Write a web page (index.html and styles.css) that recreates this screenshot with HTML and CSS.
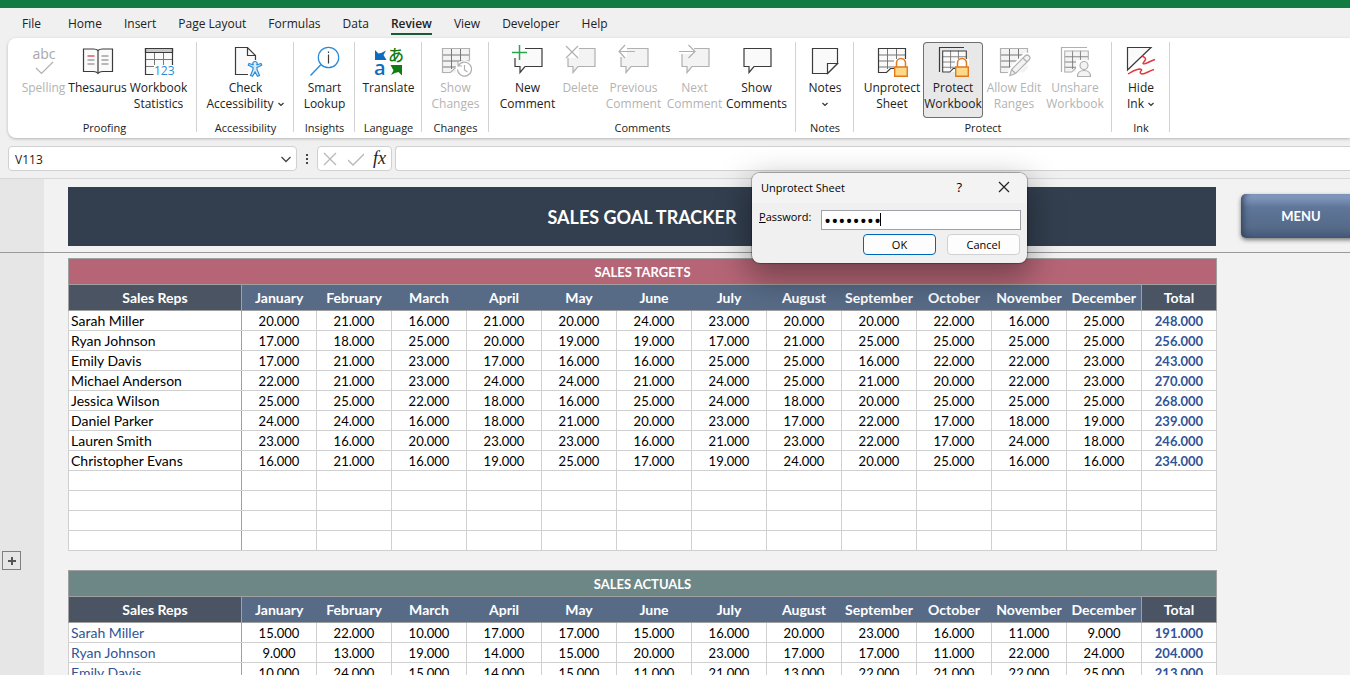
FILE: index.html
```
<!DOCTYPE html>
<html lang="en">
<head>
    <meta charset="UTF-8">
    <meta name="viewport" content="width=device-width, initial-scale=1.0">
    <title>Sales Goal Tracker</title>
    <link rel="stylesheet" href="styles.css">
</head>
<body>

    <!-- Shared icon parts -->
    <svg class="defs" aria-hidden="true">
        <symbol id="bubble" viewBox="0 0 32 32">
            <path d="M3 3.500h27v18H13l-5 6v-6H3z"/>
        </symbol>
        <symbol id="grid" viewBox="0 0 32 32">
            <path d="M2.500 3.500h27v20l-4 4h-12l-3-1-3 2h-5z" stroke="none"/>
            <path d="M2.500 10h27M2.500 16h27M2.500 22h17M11.500 3v21M20.500 3v19" class="thin"/>
            <path d="M29.500 15V3.500h-27v24h8l4-4h4" fill="none"/>
        </symbol>
        <symbol id="lock" viewBox="0 0 32 32">
            <path d="M18 14h14v18H18z" class="halo"/>
            <path d="M20.500 22v-4a4.500 4.500 0 0 1 9 0v4" fill="#fff" stroke="#e07a1f" stroke-width="1.500"/>
            <path d="M18.700 22h12.600v9.300H18.700z" fill="#fbd989" stroke="#e07a1f" stroke-width="1.400"/>
        </symbol>
        <symbol id="chevron" viewBox="0 0 8 8">
            <path d="M1.500 3l2.500 2.500L6.500 3" fill="none" stroke="#333" stroke-width="1.200"/>
        </symbol>
    </svg>

    <header>
        <div class="titlebar"></div>
        <nav class="tabs">
            <a href="#" class="file">File</a>
            <a href="#">Home</a>
            <a href="#">Insert</a>
            <a href="#">Page Layout</a>
            <a href="#">Formulas</a>
            <a href="#">Data</a>
            <a href="#" class="active">Review</a>
            <a href="#">View</a>
            <a href="#">Developer</a>
            <a href="#">Help</a>
        </nav>

        <div class="ribbon">
            <section class="group proofing">
                <div class="tools">
                    <button class="tool narrow" disabled>
                        <svg class="icon" viewBox="0 0 32 32"><text x="16" y="14" text-anchor="middle" class="abc">abc</text><path d="M8 23l5.500 5.500L25 17" fill="none"/></svg>
                        <span>Spelling</span>
                    </button>
                    <button class="tool wide">
                        <svg class="icon" viewBox="0 0 32 32"><path d="M1.500 4h10q3 0 4.500 1.500Q17.500 4 20.500 4h10v22.500h-10q-3 0-4.500 2-1.500-2-4.500-2h-10zM16 5.500v22"/><path d="M5.500 15h7M5.500 19h7M19.500 11h7M19.500 15h7M19.500 19h7" class="thin"/><path d="M5.500 11h7" stroke="#d13438"/></svg>
                        <span>Thesaurus</span>
                    </button>
                    <button class="tool">
                        <svg class="icon" viewBox="0 0 32 32"><path d="M2.500 3.500h27v26h-27z" stroke="none"/><path d="M2.500 3.500h27v4h-27z" fill="#c8c8c8"/><path d="M2.500 14.500h27M2.500 21.500h9M11.500 8v13M20.500 8v12" class="thin"/><path d="M29.500 20V3.500h-27v26h8" fill="none"/><path d="M11 20h21v12H11z" fill="#fff" stroke="none"/><text x="11" y="30" class="digits">123</text></svg>
                        <span>Workbook<br>Statistics</span>
                    </button>
                </div>
                <h2>Proofing</h2>
            </section>

            <section class="group access">
                <div class="tools">
                    <button class="tool broad">
                        <svg class="icon" viewBox="0 0 32 32"><path d="M5.500 2.500h12l8 8v18h-20z" stroke="none"/><path d="M18 29.500H5.500v-27h12l8 8V15M17.500 2.500v8h8" fill="none"/><path d="M18 15h14v17H18z" class="halo"/><path d="M25 16.500a2 2 0 0 1 1.500 3.500l4.500-1.500.7 1.800-4.700 2.200v2l2.500 6-2 .8L25 27l-2.500 4.300-2-.8 2.500-6v-2l-4.700-2.200.7-1.800 4.500 1.500a2 2 0 0 1 1.500-3.500z" fill="#d6ecfa" stroke="#2b8bd6"/></svg>
                        <span>Check<br>Accessibility <svg class="chev"><use href="#chevron"/></svg></span>
                    </button>
                </div>
                <h2>Accessibility</h2>
            </section>

            <section class="group insights">
                <div class="tools">
                    <button class="tool">
                        <svg class="icon" viewBox="0 0 32 32"><circle cx="19.500" cy="12.500" r="10.200" stroke="#2b8bd6" fill="#fff"/><path d="M12 19.500L1.500 30.500" stroke="#2b8bd6" stroke-width="1.400"/><path d="M19.500 9.500v9M19.500 6.500v1.500"/></svg>
                        <span>Smart<br>Lookup</span>
                    </button>
                </div>
                <h2>Insights</h2>
            </section>

            <section class="group medium">
                <div class="tools">
                    <button class="tool">
                        <svg class="icon" viewBox="0 0 32 32"><path d="M2 5l3.500 3.500Q9 8 13 5.500L10.500 10l3 5H2z" fill="#0f6cbd" stroke="none"/><text x="1" y="30" class="latin">a</text><text x="15" y="16" class="kana">あ</text><path d="M29 20v10.500L25.500 27Q22 27.500 18 30l2.500-4.500L17.500 20z" fill="#107c10" stroke="none"/></svg>
                        <span>Translate</span>
                    </button>
                </div>
                <h2>Language</h2>
            </section>

            <section class="group medium">
                <div class="tools">
                    <button class="tool" disabled>
                        <svg class="icon" viewBox="0 0 32 32"><use href="#grid"/><circle cx="24.500" cy="24" r="9" class="halo"/><path d="M18.500 20.500a7 7 0 1 1-1 4M18 17v4h4M24.500 20v5l3 2" fill="none"/></svg>
                        <span>Show<br>Changes</span>
                    </button>
                </div>
                <h2>Changes</h2>
            </section>

            <section class="group comments">
                <div class="tools">
                    <button class="tool">
                        <svg class="icon" viewBox="0 0 32 32"><use href="#bubble"/><path d="M0 1h7v12H0zM7 1h6v6H7z" fill="#fff" stroke="none"/><path d="M7.500 0v15M0 7.500h15" stroke="#2ea44f" stroke-width="1.500"/></svg>
                        <span>New<br>Comment</span>
                    </button>
                    <button class="tool narrow" disabled>
                        <svg class="icon" viewBox="0 0 32 32"><use href="#bubble"/><path d="M0 0h14v13H0z" fill="#fff" stroke="none"/><path d="M1 1l12 12M13 1L1 13"/></svg>
                        <span>Delete</span>
                    </button>
                    <button class="tool" disabled>
                        <svg class="icon" viewBox="0 0 32 32"><use href="#bubble"/><path d="M0 0h9v12H0z" fill="#fff" stroke="none"/><path d="M17 6.500H1M7 0L1 6.500 7 13" fill="none"/></svg>
                        <span>Previous<br>Comment</span>
                    </button>
                    <button class="tool wide" disabled>
                        <svg class="icon" viewBox="0 0 32 32"><use href="#bubble"/><path d="M0 1h15v8H0z" fill="#fff" stroke="none"/><path d="M0 6.500h16M9.500 0L16 6.500 9.500 13" fill="none"/></svg>
                        <span>Next<br>Comment</span>
                    </button>
                    <button class="tool wide">
                        <svg class="icon" viewBox="0 0 32 32"><use href="#bubble"/></svg>
                        <span>Show<br>Comments</span>
                    </button>
                </div>
                <h2>Comments</h2>
            </section>

            <section class="group short">
                <div class="tools">
                    <button class="tool small">
                        <svg class="icon" viewBox="0 0 32 32"><path d="M3.500 3.500h25v15l-10 10h-15z"/><path d="M18.500 28.500v-10h10z" fill="#fff"/></svg>
                        <span>Notes<br><svg class="chev"><use href="#chevron"/></svg></span>
                    </button>
                </div>
                <h2>Notes</h2>
            </section>

            <section class="group protect">
                <div class="tools">
                    <button class="tool wide">
                        <svg class="icon" viewBox="0 0 32 32"><use href="#grid"/><use href="#lock"/></svg>
                        <span>Unprotect<br>Sheet</span>
                    </button>
                    <button class="tool pressed">
                        <svg class="icon" viewBox="0 0 32 32"><path d="M27 2.500H2.500V27" fill="none"/><use href="#grid" x="3" y="3" width="29" height="28"/><use href="#lock"/></svg>
                        <span>Protect<br>Workbook</span>
                    </button>
                    <button class="tool wide" disabled>
                        <svg class="icon" viewBox="0 0 32 32"><use href="#grid"/><path d="M11 31l2-7 14-14a3 3 0 0 1 4 4L17 28z" class="outline"/><path d="M12 30.500l1.500-6L27 11a2.800 2.800 0 0 1 4 4L17.500 28.500zM13.500 24.500l4 4M25 13l4 4"/></svg>
                        <span>Allow Edit<br>Ranges</span>
                    </button>
                    <button class="tool" disabled>
                        <svg class="icon" viewBox="0 0 32 32"><path d="M28 2.500H2.500V27" fill="none"/><use href="#grid" x="3" y="3" width="29" height="28"/><path d="M17 15h15v17H17z" class="halo"/><circle cx="25" cy="20.500" r="4"/><path d="M18.500 31.500q0-6 6.500-6t6.500 6z"/></svg>
                        <span>Unshare<br>Workbook</span>
                    </button>
                </div>
                <h2>Protect</h2>
            </section>

            <section class="group short">
                <div class="tools">
                    <button class="tool small">
                        <svg class="icon" viewBox="0 0 32 32"><path d="M2.500 2.500H26L2.500 25z"/><path d="M17 11q5 2 3 4.500t-2 3q1 1 5-1t7-3M3 29q6-4 11-5 4 0 2 2t1 3q2 0 6-2t6-2.500" fill="none" stroke="#e0393e" stroke-width="1.500"/></svg>
                        <span>Hide<br>Ink <svg class="chev"><use href="#chevron"/></svg></span>
                    </button>
                </div>
                <h2>Ink</h2>
            </section>
        </div>

        <div class="formula-bar">
            <div class="name-box">
                <input type="text" value="V113" aria-label="Name box">
                <button aria-label="Open name list"><svg viewBox="0 0 12 12"><path d="M1.500 4L6 8.500 10.500 4" fill="none" stroke="#444" stroke-width="1.300"/></svg></button>
            </div>
            <svg class="dots" viewBox="0 0 4 14"><path d="M1 2h2v2H1zM1 6h2v2H1zM1 10h2v2H1z" fill="#444"/></svg>
            <div class="fx-box">
                <button aria-label="Cancel entry"><svg viewBox="0 0 16 16"><path d="M2 2l12 12M14 2L2 14" fill="none" stroke="#b8b8b8" stroke-width="1.300"/></svg></button>
                <button aria-label="Enter"><svg viewBox="0 0 16 16"><path d="M0 9l5 5L16 3" fill="none" stroke="#b8b8b8" stroke-width="1.300"/></svg></button>
                <button class="fx">fx</button>
            </div>
            <input type="text" class="formula" aria-label="Formula">
        </div>
    </header>

    <main>
        <!-- Frozen rows -->
        <div class="pane frozen">
            <div class="gutter"></div>
            <h1>SALES GOAL TRACKER</h1>
            <button class="menu">MENU</button>
        </div>

        <div class="pane">
            <div class="gutter"><button class="expand" aria-label="Expand group"></button></div>
            <div class="tables">
                <table class="targets">
                    <colgroup><col class="rep"></colgroup>
                    <thead>
                        <tr><th colspan="14">SALES TARGETS</th></tr>
                        <tr><th>Sales Reps</th><th>January</th><th>February</th><th>March</th><th>April</th><th>May</th><th>June</th><th>July</th><th>August</th><th>September</th><th>October</th><th>November</th><th>December</th><th>Total</th></tr>
                    </thead>
                    <tbody>
                        <tr><td>Sarah Miller</td><td>20.000</td><td>21.000</td><td>16.000</td><td>21.000</td><td>20.000</td><td>24.000</td><td>23.000</td><td>20.000</td><td>20.000</td><td>22.000</td><td>16.000</td><td>25.000</td><td>248.000</td></tr>
                        <tr><td>Ryan Johnson</td><td>17.000</td><td>18.000</td><td>25.000</td><td>20.000</td><td>19.000</td><td>19.000</td><td>17.000</td><td>21.000</td><td>25.000</td><td>25.000</td><td>25.000</td><td>25.000</td><td>256.000</td></tr>
                        <tr><td>Emily Davis</td><td>17.000</td><td>21.000</td><td>23.000</td><td>17.000</td><td>16.000</td><td>16.000</td><td>25.000</td><td>25.000</td><td>16.000</td><td>22.000</td><td>22.000</td><td>23.000</td><td>243.000</td></tr>
                        <tr><td>Michael Anderson</td><td>22.000</td><td>21.000</td><td>23.000</td><td>24.000</td><td>24.000</td><td>21.000</td><td>24.000</td><td>25.000</td><td>21.000</td><td>20.000</td><td>22.000</td><td>23.000</td><td>270.000</td></tr>
                        <tr><td>Jessica Wilson</td><td>25.000</td><td>25.000</td><td>22.000</td><td>18.000</td><td>16.000</td><td>25.000</td><td>24.000</td><td>18.000</td><td>20.000</td><td>25.000</td><td>25.000</td><td>25.000</td><td>268.000</td></tr>
                        <tr><td>Daniel Parker</td><td>24.000</td><td>24.000</td><td>16.000</td><td>18.000</td><td>21.000</td><td>20.000</td><td>23.000</td><td>17.000</td><td>22.000</td><td>17.000</td><td>18.000</td><td>19.000</td><td>239.000</td></tr>
                        <tr><td>Lauren Smith</td><td>23.000</td><td>16.000</td><td>20.000</td><td>23.000</td><td>23.000</td><td>16.000</td><td>21.000</td><td>23.000</td><td>22.000</td><td>17.000</td><td>24.000</td><td>18.000</td><td>246.000</td></tr>
                        <tr><td>Christopher Evans</td><td>16.000</td><td>21.000</td><td>16.000</td><td>19.000</td><td>25.000</td><td>17.000</td><td>19.000</td><td>24.000</td><td>20.000</td><td>25.000</td><td>16.000</td><td>16.000</td><td>234.000</td></tr>
                        <tr><td></td><td></td><td></td><td></td><td></td><td></td><td></td><td></td><td></td><td></td><td></td><td></td><td></td><td></td></tr>
                        <tr><td></td><td></td><td></td><td></td><td></td><td></td><td></td><td></td><td></td><td></td><td></td><td></td><td></td><td></td></tr>
                        <tr><td></td><td></td><td></td><td></td><td></td><td></td><td></td><td></td><td></td><td></td><td></td><td></td><td></td><td></td></tr>
                        <tr><td></td><td></td><td></td><td></td><td></td><td></td><td></td><td></td><td></td><td></td><td></td><td></td><td></td><td></td></tr>
                    </tbody>
                </table>

                <table class="actuals">
                    <colgroup><col class="rep"></colgroup>
                    <thead>
                        <tr><th colspan="14">SALES ACTUALS</th></tr>
                        <tr><th>Sales Reps</th><th>January</th><th>February</th><th>March</th><th>April</th><th>May</th><th>June</th><th>July</th><th>August</th><th>September</th><th>October</th><th>November</th><th>December</th><th>Total</th></tr>
                    </thead>
                    <tbody>
                        <tr><td>Sarah Miller</td><td>15.000</td><td>22.000</td><td>10.000</td><td>17.000</td><td>17.000</td><td>15.000</td><td>16.000</td><td>20.000</td><td>23.000</td><td>16.000</td><td>11.000</td><td>9.000</td><td>191.000</td></tr>
                        <tr><td>Ryan Johnson</td><td>9.000</td><td>13.000</td><td>19.000</td><td>14.000</td><td>15.000</td><td>20.000</td><td>23.000</td><td>17.000</td><td>17.000</td><td>11.000</td><td>22.000</td><td>24.000</td><td>204.000</td></tr>
                        <tr><td>Emily Davis</td><td>10.000</td><td>24.000</td><td>15.000</td><td>14.000</td><td>15.000</td><td>11.000</td><td>21.000</td><td>13.000</td><td>22.000</td><td>21.000</td><td>22.000</td><td>25.000</td><td>213.000</td></tr>
                    </tbody>
                </table>
            </div>
        </div>
    </main>

    <!-- Unprotect dialog -->
    <form class="dialog" role="dialog" aria-labelledby="dialogTitle">
        <div class="dialog-head">
            <span id="dialogTitle">Unprotect Sheet</span>
            <button type="button" class="help" aria-label="Help">?</button>
            <button type="button" class="close" aria-label="Close"><svg viewBox="0 0 12 12"><path d="M1 1l10 10M11 1L1 11" fill="none" stroke="#222" stroke-width="1.200"/></svg></button>
        </div>
        <div class="field">
            <label for="password"><u>P</u>assword:</label>
            <div class="password">
                <input type="password" id="password" value="tracker1">
                <span class="caret"></span>
            </div>
        </div>
        <div class="actions">
            <button type="button" class="ok">OK</button>
            <button type="button">Cancel</button>
        </div>
    </form>

</body>
</html>
```
FILE: styles.css
```
/* Reset */
* {
    box-sizing: border-box;
}

body, h1, h2, form {
    margin: 0;
    padding: 0;
}

body {
    height: 100vh;
    overflow: hidden;
    display: flex;
    flex-direction: column;
    background: #f0f0f0;
    color: #222;
    font-family: "Open Sans", "Noto Sans", sans-serif;
    font-size: 12px;
}

button, input {
    margin: 0;
    padding: 0;
    border: none;
    background: none;
    color: inherit;
    font-family: inherit;
    font-size: inherit;
    outline: none;
}

.defs {
    display: none;
}

/* Tabs */
.titlebar {
    height: 8px;
    background: #107c41;
}

.tabs {
    display: flex;
    gap: 22px;
    height: 30px;
    padding: 6px 22px 0;
}

.tabs a {
    height: 21px;
    line-height: 19px;
    color: #222;
    text-decoration: none;
}

.tabs .file {
    margin-right: 5px;
}

.tabs .active {
    font-weight: 600;
    border-bottom: 2px solid #185c37;
}

/* Ribbon */
.ribbon {
    display: flex;
    height: 100px;
    margin-left: 8px;
    background: #fff;
    border-radius: 8px 0 0 8px;
    box-shadow: 0 1px 3px rgba(0, 0, 0, 0.25);
}

.group {
    flex: none;
    display: flex;
    flex-direction: column;
    justify-content: space-between;
    padding: 4px 0 2px;
    background: linear-gradient(#d2d2d2, #d2d2d2) right 4px / 1px 90px no-repeat;
}

.proofing { width: 189px; padding-left: 4px; }
.access { width: 97px; }
.insights { width: 61px; }
.short { width: 58px; }
.medium { width: 67px; }
.comments { width: 307px; }
.protect { width: 258px; }

.tools {
    display: flex;
    justify-content: center;
}

.group h2 {
    font-size: 11px;
    font-weight: normal;
    line-height: 16px;
    text-align: center;
}

.tool {
    width: 60px;
    height: 76px;
    flex: none;
    display: flex;
    flex-direction: column;
    align-items: center;
    gap: 3px;
    padding-top: 3px;
    border-radius: 4px;
    line-height: 16px;
    white-space: nowrap;
}

.tool.narrow { width: 46px; }
.tool.small { width: 56px; }
.tool.wide { width: 62px; }
.tool.broad { width: 90px; }

.tool.pressed {
    background: #e8e8e8;
    box-shadow: inset 0 0 0 1px #707070;
}

.tool:disabled {
    color: #b3b3b3;
}

.icon {
    width: 32px;
    height: 32px;
    flex: none;
    overflow: visible;
    fill: #fafafa;
    stroke: #3b3b3b;
    stroke-width: 1.2;
}

.tool:disabled .icon {
    fill: #f3f3f3;
    stroke: #b0b0b0;
}

.thin {
    stroke: #777;
    stroke-width: 1;
}

.tool:disabled .thin {
    stroke: #b8b8b8;
}

.halo {
    fill: #fff;
    stroke: none;
}

.outline {
    stroke: #fff;
    stroke-width: 4;
}

.pressed .halo {
    fill: #e8e8e8;
}

.icon text {
    stroke: none;
}

.icon .abc {
    font-size: 14px;
    fill: #a8a8a8;
}

.digits {
    font-size: 12px;
    fill: #2b8bd6;
}

.latin {
    font-size: 20px;
    font-weight: 600;
    fill: #0f6cbd;
}

.kana {
    font-family: "Noto Sans CJK JP", sans-serif;
    font-size: 16px;
    font-weight: 500;
    fill: #107c10;
}

.chev {
    width: 8px;
    height: 8px;
}

/* Formula bar */
.formula-bar {
    display: flex;
    height: 41px;
    padding: 8px 0 7px 8px;
    border-bottom: 1px solid #d8d8d8;
}

.name-box, .fx-box, .formula {
    background: #fff;
    border: 1px solid #d0d0d0;
    border-radius: 4px;
}

.name-box {
    display: flex;
    width: 289px;
    padding: 1px 4px 0 6px;
}

.name-box input {
    flex: 1;
    min-width: 0;
}

.name-box svg {
    display: block;
    width: 12px;
    height: 12px;
}

.dots {
    width: 4px;
    height: 14px;
    margin: 6px 8px;
}

.fx-box {
    display: flex;
    justify-content: space-between;
    align-items: center;
    width: 75px;
    padding: 0 5px 0 4px;
}

.fx-box svg {
    display: block;
    width: 16px;
    height: 16px;
}

.fx {
    font-family: "Liberation Serif", serif;
    font-size: 18px;
    font-style: italic;
}

.formula {
    flex: 1;
    min-width: 0;
    margin-left: 3px;
    border-right: none;
    border-radius: 4px 0 0 4px;
}

/* Sheet */
main {
    flex: 1;
    min-height: 0;
    display: flex;
    flex-direction: column;
    overflow: hidden;
    background: #f2f2f2;
    font-family: Lato, Carlito, sans-serif;
    font-size: 13px;
}

.pane {
    display: flex;
    flex: 1 0 auto;
}

.gutter {
    flex: none;
    width: 44px;
    margin-right: 24px;
    background: #e6e6e6;
}

.frozen {
    flex: none;
    height: 74px;
    border-bottom: 1px solid #999;
}

.frozen h1 {
    flex: 1;
    height: 59px;
    margin-top: 8px;
    background: #333f4f;
    color: #fff;
    font-size: 18px;
    line-height: 60px;
    text-align: center;
}

.menu {
    flex: none;
    width: 120px;
    height: 44px;
    margin: 15px -11px 0 25px;
    border-radius: 5px;
    background: linear-gradient(#8ba3c9, #5f7699 30%, #566b8a 75%, #46587a);
    box-shadow: inset 5px 0 6px -3px #33425a, 0 2px 4px rgba(0, 0, 0, 0.5);
    color: #fff;
    font-weight: bold;
}

.expand {
    display: block;
    width: 19px;
    height: 19px;
    margin: 298px 0 0 2px;
    border: 1px solid #808080;
    background:
        linear-gradient(#555, #555) center / 8px 2px no-repeat,
        linear-gradient(#555, #555) center / 2px 8px no-repeat;
}

.tables {
    flex: 1;
    margin-right: 133px;
    padding-top: 5px;
}

table {
    width: 100%;
    margin-bottom: 19px;
    border-collapse: collapse;
    table-layout: fixed;
    background: #fff;
    border: 1px solid #a0a0a0;
    color: #000;
}

.rep {
    width: 173px;
}

th, td {
    padding: 0;
    text-align: center;
    white-space: nowrap;
}

th {
    height: 26px;
    background: #576b87;
    border-bottom: 1px solid #a0a0a0;
    color: #fff;
    font-size: 14px;
    line-height: 18px;
}

th[colspan] {
    font-size: 13px;
}

td {
    height: 20px;
    line-height: 18px;
    border: 1px solid #d0d0d0;
}

th:first-child, th:last-child {
    background: #4a5462;
}

th:first-child, td:first-child {
    border-right: 1px solid #a0a0a0;
}

th:last-child, td:last-child {
    border-left: 1px solid #a0a0a0;
}

td:first-child {
    padding-left: 2px;
    font-size: 14px;
    text-align: left;
}

td:last-child {
    color: #305496;
    font-weight: bold;
}

.targets th[colspan] {
    background: #b56576;
}

.actuals th[colspan] {
    background: #6d8787;
}

.actuals td:first-child {
    color: #305496;
}

/* Dialog */
.dialog {
    position: absolute;
    top: 173px;
    left: 752px;
    width: 275px;
    height: 90px;
    background: #f0f0f0;
    border-radius: 8px;
    box-shadow: 0 0 1px 1px rgba(0, 0, 0, 0.3), 0 12px 32px 4px rgba(0, 0, 0, 0.35);
    color: #000;
    font-size: 11px;
}

.dialog-head {
    display: flex;
    align-items: center;
    height: 30px;
    padding: 0 17px 2px 9px;
    background: #f3f3f3;
    border-radius: 8px 8px 0 0;
}

.help {
    margin-left: auto;
    font-size: 13px;
}

.close {
    margin-left: 36px;
}

.close svg {
    display: block;
    width: 12px;
    height: 12px;
}

.field {
    display: flex;
    justify-content: space-between;
    padding: 7px 6px 0 7px;
    line-height: 14px;
}

.password {
    position: relative;
    width: 200px;
    height: 20px;
}

.password input {
    width: 100%;
    height: 100%;
    padding: 1px 0 0 2px;
    background: #fff;
    border: 1px solid #a0a0a8;
    font-size: 19px;
}

.caret {
    position: absolute;
    top: 3px;
    left: 59px;
    width: 1px;
    height: 13px;
    background: #000;
}

.actions {
    display: flex;
    justify-content: flex-end;
    gap: 11px;
    padding: 4px 7px 0 0;
}

.actions button {
    width: 73px;
    height: 21px;
    background: #fdfdfd;
    border: 1px solid #d0d0d0;
    border-radius: 4px;
}

.actions .ok {
    border-color: #0067b8;
}
```
